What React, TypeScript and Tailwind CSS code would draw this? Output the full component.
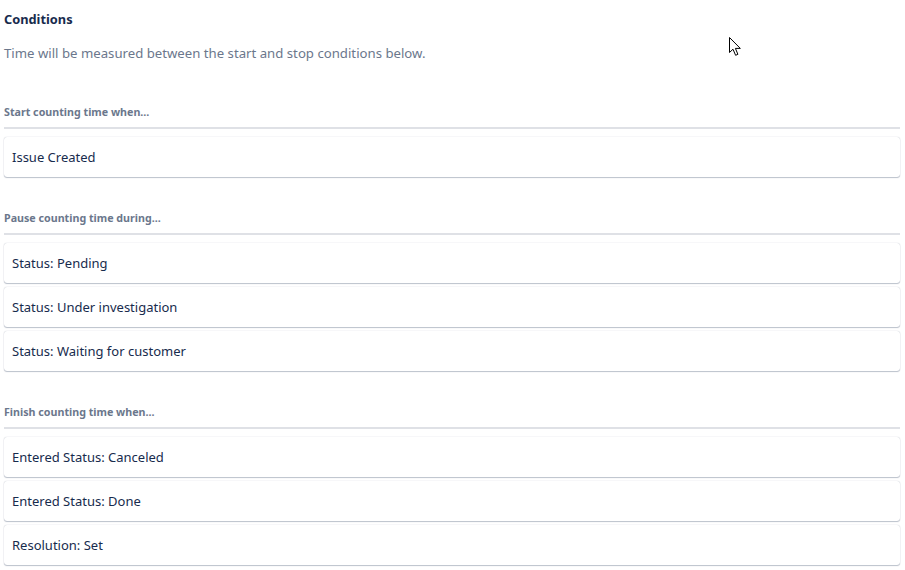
const sections = [
  { label: "Start counting time when...", items: ["Issue Created"] },
  {
    label: "Pause counting time during...",
    items: ["Status: Pending", "Status: Under investigation", "Status: Waiting for customer"],
  },
  {
    label: "Finish counting time when...",
    items: ["Entered Status: Canceled", "Entered Status: Done", "Resolution: Set"],
  },
];

export default function App() {
  return (
    <div
      className="w-[905px] h-[570px] overflow-hidden relative bg-white pl-1 pr-[5px] text-[#172b4d]"
      style={{ fontFamily: '"Noto Sans", "Open Sans", sans-serif' }}
    >
      <div className="pt-[11px] text-[12.8px] leading-4 font-bold">Conditions</div>
      <div className="mt-4 text-[13.2px] leading-5 text-[#6b778c]">
        Time will be measured between the start and stop conditions below.
      </div>

      <div className="mt-[41px] flex flex-col gap-[33px]">
        {sections.map((s) => (
          <div key={s.label}>
            <div className="text-[10.7px] leading-4 font-bold text-[#6b778c] pb-[7px] border-b-2 border-[#dfe1e6]">
              {s.label}
            </div>
            <div className="mt-2 flex flex-col gap-1">
              {s.items.map((it) => (
                <div
                  key={it}
                  className="h-10 flex items-center px-2 pt-[2px] rounded-[3px] bg-white text-[13px] shadow-[0_1px_1px_rgba(9,30,66,0.25),0_0_1px_rgba(9,30,66,0.31)]"
                >
                  {it}
                </div>
              ))}
            </div>
          </div>
        ))}
      </div>

      <svg
        className="absolute left-[729px] top-[37px]"
        width="13"
        height="20"
        viewBox="0 0 13 20"
      >
        <path
          d="M0.5 0.5 L0.5 15.5 L4 12.2 L6.6 18.3 L8.9 17.3 L6.4 11.4 L11.3 11.4 Z"
          fill="white"
          stroke="black"
          strokeWidth="1"
          strokeLinejoin="miter"
        />
      </svg>
    </div>
  );
}
